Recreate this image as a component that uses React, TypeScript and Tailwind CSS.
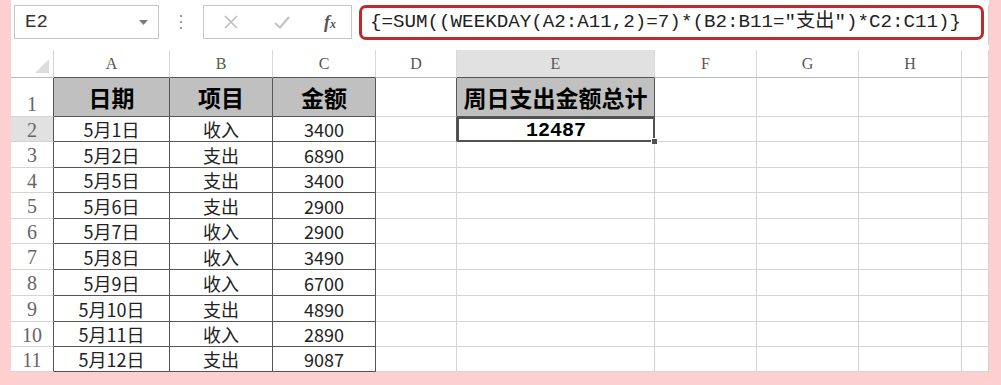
import React from "react";

const LETTERS = ["A", "B", "C", "D", "E", "F", "G", "H", ""];

const DATA: [string, string, string][] = [
  ["5月1日", "收入", "3400"],
  ["5月2日", "支出", "6890"],
  ["5月5日", "支出", "3400"],
  ["5月6日", "支出", "2900"],
  ["5月7日", "收入", "2900"],
  ["5月8日", "收入", "3490"],
  ["5月9日", "收入", "6700"],
  ["5月10日", "支出", "4890"],
  ["5月11日", "收入", "2890"],
  ["5月12日", "支出", "9087"],
];

const cellFont = { fontFamily: '"Noto Sans CJK SC", sans-serif' };
const serif = { fontFamily: '"Liberation Serif", "Noto Sans CJK SC", serif' };
const mono = { fontFamily: '"Liberation Mono", "Noto Sans CJK SC", monospace' };

const FormulaBar: React.FC = () => (
  <div className="flex h-[50px] items-start pt-[5px]">
    {/* name box */}
    <div className="ml-[3px] flex h-[34px] w-[145px] items-center justify-between border border-[#c6c6c6] pl-[10px] pr-[10px]">
      <span className="text-[19px] text-[#333]" style={mono}>E2</span>
      <svg width="9" height="5" viewBox="0 0 9 5">
        <polygon points="0,0 9,0 4.5,5" fill="#7a7a7a" />
      </svg>
    </div>

    {/* splitter dots */}
    <div className="flex h-[34px] w-[44px] items-center justify-center">
      <svg width="3" height="15" viewBox="0 0 3 15">
        <rect x="0" y="0" width="2" height="2" fill="#9a9a9a" />
        <rect x="0" y="6" width="2" height="2" fill="#9a9a9a" />
        <rect x="0" y="12" width="2" height="2" fill="#9a9a9a" />
      </svg>
    </div>

    {/* cancel / enter / fx */}
    <div className="flex h-[34px] w-[149px] items-center border border-[#c6c6c6] pl-[19px]">
      <svg width="16" height="14" viewBox="0 0 16 14">
        <path d="M2 1 L14 13 M14 1 L2 13" stroke="#bdbdbd" strokeWidth="1.6" />
      </svg>
      <svg className="ml-[35px]" width="16" height="14" viewBox="0 0 16 14">
        <path d="M1 8 L6 12.5 L15 2" stroke="#c4c4c4" strokeWidth="2.2" fill="none" />
      </svg>
      <span
        className="ml-[34px] text-[18px] font-bold italic text-[#555]"
        style={{ fontFamily: '"Liberation Serif", serif' }}
      >
        f<span className="text-[12px]">x</span>
      </span>
    </div>

    {/* formula input */}
    <div className="ml-[3px] flex h-[40px] flex-1 items-start border-r border-[#d0d0d0] pl-[4px] pr-[4px]">
      <div className="flex h-[35px] flex-1 items-center rounded-[7px] border-[3px] border-[#c0282d] pl-[8px]">
        <span className="text-[19.2px] text-[#222]" style={mono}>
          {'{=SUM((WEEKDAY(A2:A11,2)=7)*(B2:B11=″支出″)*C2:C11)}'}
        </span>
      </div>
    </div>
  </div>
);

const Sheet: React.FC = () => {
  const cells: React.ReactNode[] = [];

  // column header row
  cells.push(
    <div key="corner" className="flex items-end justify-end border-r border-b border-r-[#d4d4d4] border-b-[#bcbcbc]">
      <svg width="16" height="16" viewBox="0 0 16 16" className="mb-[3px] mr-[3px]">
        <polygon points="15,1 15,15 1,15" fill="#dcdcdc" />
      </svg>
    </div>
  );
  LETTERS.forEach((l, i) => {
    const tableTop = i <= 2 || i === 4;
    cells.push(
      <div
        key={"h" + i}
        className={
          "flex items-center justify-center border-r border-b border-r-[#d8d8d8] text-[16px] text-[#555] " +
          (tableTop ? "border-b-[#555] " : "border-b-[#bcbcbc] ") +
          (i === 4 ? "bg-[#e1e1e1]" : "bg-white")
        }
        style={serif}
      >
        {l}
      </div>
    );
  });

  // row 1 (headers)
  cells.push(
    <div key="r1" className="flex items-end justify-center border-r border-b border-r-[#555] border-b-[#d4d4d4] pb-[1px] text-[20px] leading-[22px] text-[#666]" style={serif}>
      1
    </div>
  );
  ["日期", "项目", "金额"].forEach((t) => {
    cells.push(
      <div
        key={"t" + t}
        className="flex items-center justify-center border-r border-b border-r-[#555] border-b-[#555] bg-[#c0c0c0] text-[23px] font-bold text-black"
        style={cellFont}
      >
        {t}
      </div>
    );
  });
  cells.push(<div key="d1" className="border-r border-b border-r-[#555] border-b-[#d4d4d4]" />);
  cells.push(
    <div
      key="e1"
      className="flex items-center justify-center border-r border-b border-r-[#555] border-b-[#555] bg-[#c0c0c0] text-[23px] font-bold text-black"
      style={cellFont}
    >
      周日支出金额总计
    </div>
  );
  for (let c = 0; c < 4; c++) {
    cells.push(<div key={"r1e" + c} className="border-r border-b border-r-[#d4d4d4] border-b-[#d4d4d4]" />);
  }

  // data rows
  DATA.forEach((row, idx) => {
    const n = idx + 2;
    cells.push(
      <div
        key={"rh" + n}
        className={
          "flex items-center justify-center border-r border-b border-r-[#555] border-b-[#d4d4d4] pt-[1px] text-[20px] leading-[22px] text-[#666] " +
          (n === 2 ? "bg-[#e1e1e1]" : "bg-white")
        }
        style={serif}
      >
        {n}
      </div>
    );
    row.forEach((v, c) =>
      cells.push(
        <div
          key={"c" + n + c}
          className="flex items-center justify-center border-r border-b border-r-[#555] border-b-[#555] text-[18px] leading-[22px] text-[#222]"
          style={cellFont}
        >
          {v}
        </div>
      )
    );
    cells.push(
      <div
        key={"d" + n}
        className={
          "border-r border-b border-b-[#d4d4d4] " + (n === 2 ? "border-r-[#555]" : "border-r-[#d4d4d4]")
        }
      />
    );
    if (n === 2) {
      cells.push(
        <div
          key="e2"
          className="relative flex items-center justify-center border-2 border-[#505050] pt-[2px] text-[20px] leading-[22px] font-bold text-black"
          style={mono}
        >
          12487
          <div className="absolute -bottom-[5px] -right-[5px] h-[7px] w-[7px] border border-white bg-[#505050]" />
        </div>
      );
    } else {
      cells.push(<div key={"e" + n} className="border-r border-b border-r-[#d4d4d4] border-b-[#d4d4d4]" />);
    }
    for (let c = 0; c < 4; c++) {
      cells.push(<div key={"x" + n + c} className="border-r border-b border-r-[#d4d4d4] border-b-[#d4d4d4]" />);
    }
  });

  return (
    <div className="grid grid-cols-[43px_116px_103px_103px_81px_198px_102px_102px_103px_27px] grid-rows-[28px_39px_25px_26px_25px_26px_25px_26px_26px_26px_25px_25px]">
      {cells}
    </div>
  );
};

export default function App() {
  return (
    <div className="h-[385px] w-[1001px] overflow-hidden bg-[#fdcfcf] pl-[11px] pr-[12px]">
      <div className="h-[372px] bg-white">
        <FormulaBar />
        <Sheet />
      </div>
    </div>
  );
}
